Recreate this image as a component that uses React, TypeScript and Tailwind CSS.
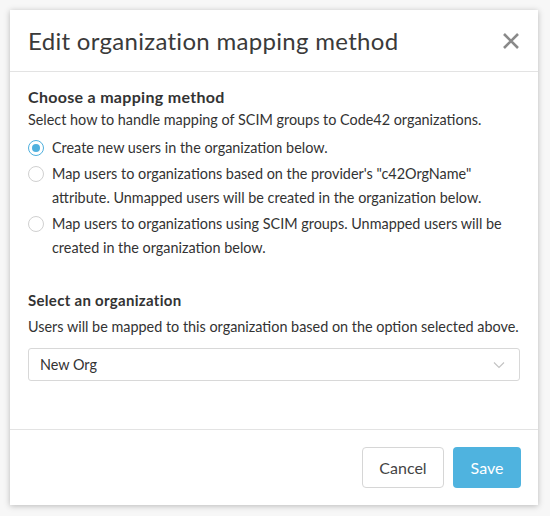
import React from "react";

const options = [
  "Create new users in the organization below.",
  'Map users to organizations based on the provider\'s "c42OrgName" attribute. Unmapped users will be created in the organization below.',
  "Map users to organizations using SCIM groups. Unmapped users will be created in the organization below.",
];

const Radio = ({ checked }: { checked: boolean }) => (
  <span
    className={`mt-[4px] flex h-[16px] w-[16px] shrink-0 items-center justify-center rounded-full border bg-white ${
      checked ? "border-[#4fb0de]" : "border-[#d0d0d0]"
    }`}
  >
    {checked && <span className="h-[8px] w-[8px] rounded-full bg-[#4fb0de]" />}
  </span>
);

const App = () => {
  return (
    <div className="h-[516px] w-[550px] bg-[#f7f7f7] pl-[10px] pt-[10px] font-['Lato',sans-serif] text-[#333]">
      <div className="flex h-[495px] w-[528px] flex-col bg-white shadow-[0_1px_6px_rgba(0,0,0,0.25)]">
        <div className="flex h-[62px] items-center justify-between border-b border-[#e3e3e3] pl-[18px] pr-[18px]">
          <h2 className="text-[24px] font-normal tracking-[0.3px] text-[#3a3a3a]">
            Edit organization mapping method
          </h2>
          <svg width="18" height="18" viewBox="0 0 18 18" className="text-[#8a8a8a]">
            <path d="M2 2 L16 16 M16 2 L2 16" stroke="currentColor" strokeWidth="2.6" />
          </svg>
        </div>
        <div className="flex-1 px-[18px] pt-[15px]">
          <h3 className="text-[16px] font-bold leading-[20px] tracking-[0.3px] text-[#333]">
            Choose a mapping method
          </h3>
          <p className="mt-[3px] text-[14.4px] leading-[20px]">
            Select how to handle mapping of SCIM groups to Code42 organizations.
          </p>
          <div className="mt-[6px] flex flex-col gap-[2px]">
            {options.map((o, i) => (
              <label key={i} className="flex gap-[8px]">
                <Radio checked={i === 0} />
                <span className="text-[14.4px] leading-[24px]">{o}</span>
              </label>
            ))}
          </div>
          <h3 className="mt-[30px] text-[15px] font-bold leading-[20px] tracking-[0.3px]">
            Select an organization
          </h3>
          <p className="mt-[7px] text-[14.4px] leading-[20px]">
            Users will be mapped to this organization based on the option selected above.
          </p>
          <div className="mt-[11px] flex h-[33px] items-center justify-between rounded-[3px] border border-[#d8d8d8] pl-[11px] pr-[14px]">
            <span className="text-[14.4px]">New Org</span>
            <svg width="12" height="8" viewBox="0 0 12 8">
              <path d="M1 1.5 L6 6.5 L11 1.5" fill="none" stroke="#c4c4c4" strokeWidth="1.2" />
            </svg>
          </div>
        </div>
        <div className="flex h-[76px] items-center justify-end gap-[9px] border-t border-[#e3e3e3] pr-[17px]">
          <button className="h-[41px] w-[82px] rounded-[4px] border border-[#d6d6d6] bg-white text-[16px] text-[#444]">
            Cancel
          </button>
          <button className="h-[41px] w-[68px] rounded-[4px] bg-[#4fb3df] text-[16px] text-white">
            Save
          </button>
        </div>
      </div>
    </div>
  );
};

export default App;
